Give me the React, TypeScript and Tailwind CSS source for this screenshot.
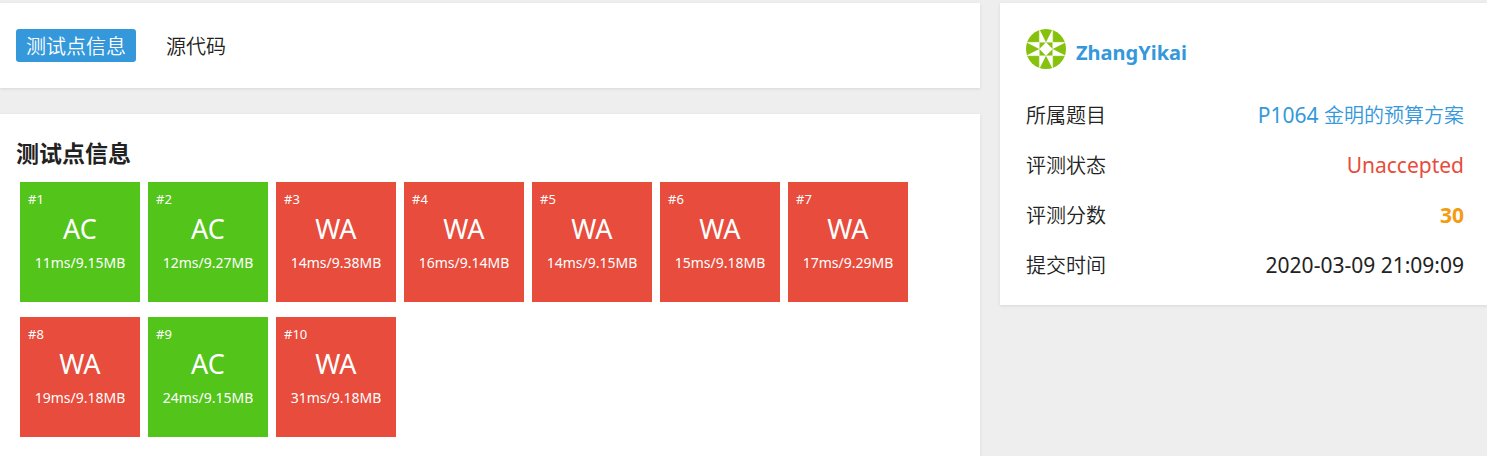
import { useState } from "react";

type Status = "AC" | "WA";

interface TestPoint {
  id: number;
  status: Status;
  time: string;
  memory: string;
}

const testPoints: TestPoint[] = [
  { id: 1, status: "AC", time: "11ms", memory: "9.15MB" },
  { id: 2, status: "AC", time: "12ms", memory: "9.27MB" },
  { id: 3, status: "WA", time: "14ms", memory: "9.38MB" },
  { id: 4, status: "WA", time: "16ms", memory: "9.14MB" },
  { id: 5, status: "WA", time: "14ms", memory: "9.15MB" },
  { id: 6, status: "WA", time: "15ms", memory: "9.18MB" },
  { id: 7, status: "WA", time: "17ms", memory: "9.29MB" },
  { id: 8, status: "WA", time: "19ms", memory: "9.18MB" },
  { id: 9, status: "AC", time: "24ms", memory: "9.15MB" },
  { id: 10, status: "WA", time: "31ms", memory: "9.18MB" },
];

const statusColor: Record<Status, string> = {
  AC: "bg-[#52c41a]",
  WA: "bg-[#e74c3c]",
};

const tabs = ["测试点信息", "源代码"];

const card = "bg-white shadow-[0_1px_3px_rgba(26,26,26,0.1)]";
const row = "flex h-[30px] items-baseline justify-between";
const label = "text-xl leading-[30px] font-[350]";

function Avatar() {
  return (
    <svg viewBox="0 0 120 120" className="size-10 rounded-full" aria-hidden="true">
      <rect width="120" height="120" fill="#86c10b" />
      <g fill="#fff">
        <path d="M40 0V40H60ZM80 0V40H60Z" />
        <path d="M40 120V80H60ZM80 120V80H60Z" />
        <path d="M0 40H40V60ZM0 80H40V60Z" />
        <path d="M120 40H80V60ZM120 80H80V60Z" />
        <path d="M60 40L80 60L60 80L40 60Z" />
      </g>
      <path
        d="M40 0V120M80 0V120M0 40H120M0 80H120"
        fill="none"
        stroke="#fff"
        strokeOpacity="0.5"
        strokeWidth="2"
      />
    </svg>
  );
}

function TestCard({ point }: { point: TestPoint }) {
  return (
    <li className={`size-[120px] px-2 pt-2 text-white ${statusColor[point.status]}`}>
      <div className="text-[13px] leading-[18px]">#{point.id}</div>
      <div className="pt-[5px] text-center text-[27px] leading-8">{point.status}</div>
      <div className="pt-[7px] text-center text-sm leading-[22px] whitespace-nowrap">
        {point.time}/{point.memory}
      </div>
    </li>
  );
}

export default function App() {
  const [active, setActive] = useState(0);

  return (
    <div className="grid min-h-screen grid-cols-[980fr_487fr] gap-5 bg-[#eee] pt-[3px] font-['Noto_Sans','Noto_Sans_CJK_SC',sans-serif] text-[#222]">
      <main className="flex min-w-0 flex-col gap-[26px]">
        <nav className={`flex gap-5 px-4 py-[26px] ${card}`}>
          {tabs.map((tab, i) => (
            <button
              key={tab}
              type="button"
              onClick={() => setActive(i)}
              className={`h-[33px] rounded-[3px] px-[10px] pt-0.5 text-xl leading-8 font-[350] ${
                i === active ? "bg-[#3498db] text-white" : ""
              }`}
            >
              {tab}
            </button>
          ))}
        </nav>

        <section className={`flex-1 px-4 pt-[23px] pb-4 ${card}`}>
          <h2 className="text-[23px] leading-8 font-bold">测试点信息</h2>
          <ul className="flex flex-wrap gap-x-2 gap-y-[15px] px-1 pt-[13px]">
            {testPoints.map((point) => (
              <TestCard key={point.id} point={point} />
            ))}
          </ul>
        </section>
      </main>

      <aside className={`min-w-0 self-start pt-[26px] pr-[23px] pb-[25px] pl-[26px] ${card}`}>
        <div className="flex items-center gap-[10px]">
          <Avatar />
          <a href="#user" className="pt-2 text-xl leading-8 font-bold text-[#3498db]">
            ZhangYikai
          </a>
        </div>
        <dl className="flex flex-col gap-5 pt-[31px] text-[21px] leading-[30px]">
          <div className={row}>
            <dt className={label}>所属题目</dt>
            <dd>
              <a href="#problem" className="text-[#3498db]">
                P1064 <span className={label}>金明的预算方案</span>
              </a>
            </dd>
          </div>
          <div className={row}>
            <dt className={label}>评测状态</dt>
            <dd className="text-[#e74c3c]">Unaccepted</dd>
          </div>
          <div className={row}>
            <dt className={label}>评测分数</dt>
            <dd className="font-bold text-[#f39c11]">30</dd>
          </div>
          <div className={row}>
            <dt className={label}>提交时间</dt>
            <dd>2020-03-09 21:09:09</dd>
          </div>
        </dl>
      </aside>
    </div>
  );
}
